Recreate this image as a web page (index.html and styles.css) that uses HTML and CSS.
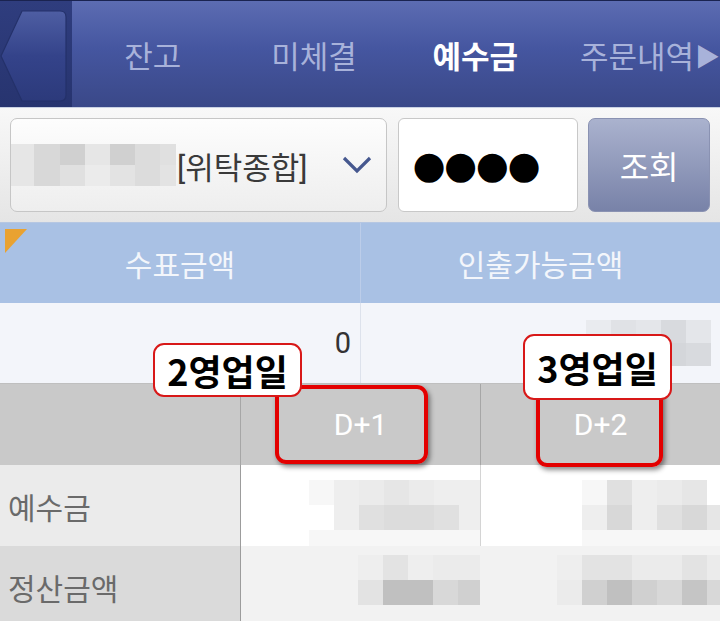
FILE: index.html
```html
<!DOCTYPE html>
<html lang="ko">
<head>
    <meta charset="utf-8" />
    <meta name="viewport" content="width=device-width, initial-scale=1" />
    <title>예수금</title>
    <link rel="stylesheet" href="styles.css">
</head>
<body>
    <header class="topbar">
        <div class="back">
            <svg viewBox="0 0 72 106" width="72" height="106">
                <defs>
                    <linearGradient id="bk" x1="0" y1="0" x2="0" y2="1">
                        <stop offset="0" stop-color="#4e5ea3" />
                        <stop offset="0.5" stop-color="#34438a" />
                        <stop offset="1" stop-color="#2c3a7b" />
                    </linearGradient>
                </defs>
                <path d="M22 10 H60 Q66 10 66 16 V94 Q66 100 60 100 H22 L1 55 Z" fill="url(#bk)" stroke="#24316a" stroke-width="1.2" />
            </svg>
        </div>
        <nav class="tabs">
            <span class="tab">잔고</span>
            <span class="tab">미체결</span>
            <span class="tab on">예수금</span>
            <span class="tab">주문내역<span class="more">▶</span></span>
        </nav>
    </header>

    <div class="toolbar">
        <div class="select">
            <div class="mosaic acct">
                <i class="c4"></i><i class="c7"></i><i class="c11"></i><i class="c4"></i><i class="c11"></i><i class="c6"></i><i class="c5"></i>
                <i class="c4"></i><i class="c7"></i><i class="c5"></i><i class="c3"></i><i class="c9"></i><i class="c6"></i><i class="c9"></i>
            </div>
            <span class="acct-type">[위탁종합]</span>
            <svg class="chev" viewBox="0 0 30 18" width="30" height="18">
                <polyline points="2,2 15,15 28,2" fill="none" stroke="#46588f" stroke-width="3.2" />
            </svg>
        </div>
        <div class="pw">●●●●</div>
        <button class="query">조회</button>
    </div>

    <div class="summary">
        <div class="sum-head first">수표금액</div>
        <div class="sum-head">인출가능금액</div>
        <div class="sum-val">0</div>
        <div class="sum-val">
            <div class="mosaic avail">
                <i class="b1"></i><i class="b2"></i><i class="b3"></i><i class="b4"></i><i class="b3"></i>
                <i class="b0"></i><i class="b1"></i><i class="b2"></i><i class="b5"></i><i class="b4"></i>
            </div>
        </div>
    </div>

    <div class="detail">
        <div class="d-head"></div>
        <div class="d-head">D+1</div>
        <div class="d-head">D+2</div>

        <div class="d-label">예수금</div>
        <div class="d-val">
            <div class="mosaic dep1">
                <i class="c1"></i><i class="c2"></i><i class="c3"></i><i class="c4"></i><i class="c3"></i><i class="c2"></i><i class="c2"></i>
                <i class="c0"></i><i class="c2"></i><i class="c5"></i><i class="c6"></i><i class="c6"></i><i class="c5"></i><i class="c2"></i>
                <i class="c1"></i><i class="c1"></i><i class="c1"></i><i class="c1"></i><i class="c1"></i><i class="c1"></i><i class="c1"></i>
            </div>
        </div>
        <div class="d-val">
            <div class="mosaic dep2">
                <i class="c1"></i><i class="c5"></i><i class="c2"></i><i class="c3"></i><i class="c4"></i><i class="c0"></i>
                <i class="c2"></i><i class="c7"></i><i class="c2"></i><i class="c5"></i><i class="c7"></i><i class="c4"></i>
                <i class="c1"></i><i class="c1"></i><i class="c1"></i><i class="c1"></i><i class="c1"></i><i class="c1"></i>
            </div>
        </div>

        <div class="d-label alt">정산금액</div>
        <div class="d-val alt">
            <div class="mosaic set1">
                <i class="c2"></i><i class="c9"></i><i class="c2"></i><i class="c3"></i><i class="c3"></i>
                <i class="c9"></i><i class="c10"></i><i class="c10"></i><i class="c7"></i><i class="c11"></i>
            </div>
        </div>
        <div class="d-val alt">
            <div class="mosaic set2">
                <i class="c2"></i><i class="c9"></i><i class="c9"></i><i class="c3"></i><i class="c3"></i><i class="c9"></i><i class="c3"></i>
                <i class="c3"></i><i class="c11"></i><i class="c10"></i><i class="c11"></i><i class="c7"></i><i class="c12"></i><i class="c7"></i>
            </div>
        </div>
    </div>

    <!-- annotation overlays -->
    <div class="mark mark-d1"></div>
    <div class="mark mark-d2"></div>
    <div class="tag tag-d1">2영업일</div>
    <div class="tag tag-d2">3영업일</div>
</body>
</html>
```

FILE: styles.css
```css
* {
    margin: 0;
    padding: 0;
    box-sizing: border-box;
}

body {
    position: relative;
    width: 720px;
    height: 621px;
    overflow: hidden;
    background: #fff;
    font-family: Roboto, "Noto Sans CJK KR", sans-serif;
}

/* top tab bar */
.topbar {
    display: flex;
    height: 108px;
    border-top: 1px solid #1a2350;
    border-bottom: 1px solid #c9d1e3;
    background: linear-gradient(#5c6cb2, #4556a0 45%, #3a4888);
}

.back {
    width: 72px;
    background: linear-gradient(#2f3d7e, #27346f);
    display: flex;
    align-items: center;
}

.back svg {
    display: block;
}

.tabs {
    flex: 1;
    display: grid;
    grid-template-columns: repeat(4, 1fr);
    align-items: center;
    text-align: center;
}

.tab {
    font-size: 31px;
    color: #a8b2da;
    white-space: nowrap;
}

.tab.on {
    color: #fff;
    font-weight: 700;
}

.tab:last-child {
    padding-left: 24px;
}

.more {
    margin-left: 1px;
    font-size: 25px;
    vertical-align: 2px;
}

/* account row */
.toolbar {
    display: flex;
    height: 115px;
    padding: 10px;
    background: linear-gradient(#f8f8f8, #e5e5e5);
    border-bottom: 1px solid #b6c7e2;
}

.select {
    width: 378px;
    display: flex;
    align-items: center;
    border: 1px solid #c6c6c6;
    border-radius: 7px;
    background: linear-gradient(#fdfdfd, #eeeeee);
}

.acct-type {
    margin-left: 1px;
    font-size: 31px;
    color: #3a3a3a;
}

.chev {
    margin-left: auto;
    margin-right: 14px;
}

.pw {
    width: 180px;
    margin-left: 11px;
    display: flex;
    align-items: center;
    padding-left: 13px;
    border: 1px solid #c8c8c8;
    border-radius: 6px;
    background: #fff;
    font-family: "DejaVu Sans", sans-serif;
    font-size: 38px;
    letter-spacing: -1.5px;
    color: #000;
}

.query {
    width: 122px;
    margin-left: 10px;
    border: 1px solid #8a92b2;
    border-radius: 7px;
    background: linear-gradient(#aab2ce, #7882a8);
    color: #fff;
    font-family: Roboto, "Noto Sans CJK KR", sans-serif;
    font-size: 32px;
}

/* pixelated (masked) values */
.mosaic {
    display: grid;
    grid-auto-rows: 25px;
}

.mosaic i {
    display: block;
}

.acct {
    grid-template-columns: 23px 26px 25px 25px 25px 25px 16px;
    grid-auto-rows: 21px;
}

.avail {
    grid-template-columns: repeat(5, 25px);
    grid-auto-rows: 23px;
}

.dep1 {
    grid-template-columns: repeat(7, 25px);
    margin: 15px 0 0 68px;
}

.dep2 {
    grid-template-columns: repeat(6, 25px);
    margin: 15px 0 0 101px;
}

.set1 {
    grid-template-columns: repeat(5, 25px);
    margin: 9px 0 0 117px;
}

.set2 {
    grid-template-columns: repeat(7, 25px);
    margin: 9px 0 0 76px;
}

.c0 { background: transparent; }
.c1 { background: #f7f7f7; }
.c2 { background: #eeeeee; }
.c3 { background: #ebebeb; }
.c4 { background: #e6e6e6; }
.c5 { background: #e0e0e0; }
.c6 { background: #dcdcdc; }
.c7 { background: #d8d8d8; }
.c9 { background: #e3e3e3; }
.c10 { background: #c0c0c0; }
.c11 { background: #d0d0d0; }
.c12 { background: #c5c5c5; }

.b0 { background: transparent; }
.b1 { background: #e9ebef; }
.b2 { background: #e0e2e6; }
.b3 { background: #e4e6ea; }
.b4 { background: #d8dade; }
.b5 { background: #d4d6da; }

/* summary table */
.summary {
    display: grid;
    grid-template-columns: 360px 360px;
}

.sum-head {
    position: relative;
    height: 80px;
    display: flex;
    align-items: center;
    justify-content: center;
    background: #a9c1e4;
    color: #f3f6fb;
    font-size: 30px;
}

.sum-head + .sum-head {
    border-left: 1px solid #bccde9;
}

.sum-head.first::before {
    content: "";
    position: absolute;
    left: 5px;
    top: 6px;
    border-top: 24px solid #e9a231;
    border-right: 22px solid transparent;
}

.sum-val {
    height: 80px;
    display: flex;
    align-items: center;
    justify-content: flex-end;
    padding-right: 9px;
    background: #f3f5fa;
    font-size: 29px;
    color: #333;
}

.sum-val:last-child {
    border-left: 1px solid #dde2ec;
}

/* D+ detail table */
.detail {
    display: grid;
    grid-template-columns: 240px 240px 240px;
    border-top: 1px solid #bfbfbf;
}

.d-head {
    height: 81px;
    display: flex;
    align-items: center;
    justify-content: center;
    background: #c9c9c9;
    color: #fff;
    font-size: 30px;
}

.d-head + .d-head {
    border-left: 1px solid #a6a6a6;
}

.d-label {
    height: 81px;
    display: flex;
    align-items: center;
    padding-left: 8px;
    background: #ebebeb;
    color: #6a6a6a;
    font-size: 30px;
}

.d-label.alt {
    background: #dadada;
}

.d-val {
    height: 81px;
    background: #fff;
    border-left: 1px solid #d4d4d4;
}

.d-label + .d-val {
    border-left-color: #9c9c9c;
}

.d-val.alt {
    background: #f2f2f2;
    border-left-color: #f2f2f2;
}

.d-label.alt + .d-val {
    border-left-color: #9c9c9c;
}

/* red annotations over the screenshot */
.mark {
    position: absolute;
    border: 4px solid #e30000;
    border-radius: 11px;
    box-shadow: 2px 3px 5px rgba(0, 0, 0, 0.45);
}

.mark-d1 {
    left: 275px;
    top: 385px;
    width: 153px;
    height: 79px;
}

.mark-d2 {
    left: 536px;
    top: 384px;
    width: 127px;
    height: 83px;
}

.tag {
    position: absolute;
    display: flex;
    align-items: center;
    justify-content: center;
    background: #fff;
    border: 2px solid #d81818;
    border-radius: 11px;
    font-family: "Noto Sans CJK KR", sans-serif;
    font-weight: 700;
    font-size: 36px;
    color: #000;
}

.tag-d1 {
    left: 153px;
    top: 343px;
    width: 149px;
    height: 54px;
}

.tag-d2 {
    left: 523px;
    top: 334px;
    width: 149px;
    height: 66px;
}
```
